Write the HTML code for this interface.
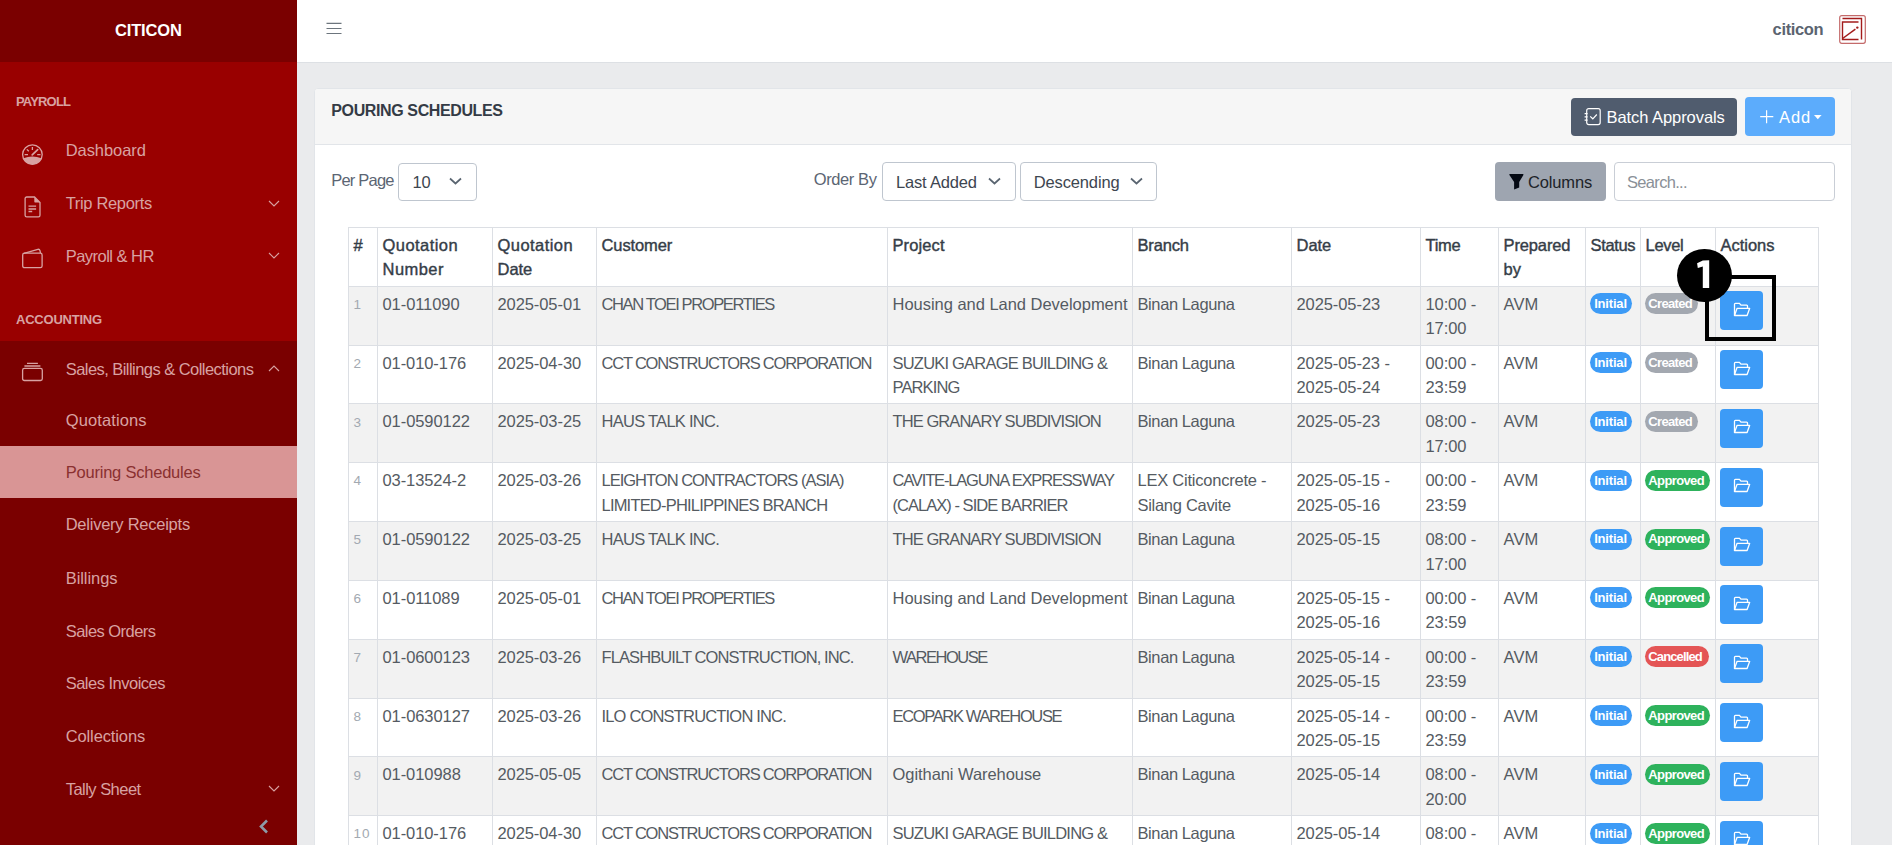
<!DOCTYPE html>
<html><head><meta charset="utf-8"><style>
html,body{margin:0;padding:0;width:1892px;height:845px;overflow:hidden;background:#eaebed;font-family:'Liberation Sans', sans-serif}
body>div,body>svg{position:absolute}
.t{white-space:nowrap}
</style></head><body>
<div style="left:0px;top:0px;width:297px;height:62px;background:#7a0000;"></div>
<div style="left:0px;top:62px;width:297px;height:279px;background:#990000;"></div>
<div style="left:0px;top:341px;width:297px;height:504px;background:#7a0000;"></div>
<div style="left:0px;top:446px;width:297px;height:52px;background:#d99595;"></div>
<div style="left:297px;top:0px;width:1595px;height:62px;background:#ffffff;border-bottom:1px solid #dde0e4;box-sizing:border-box;height:63px"></div>
<div style="left:314px;top:88px;width:1538px;height:800px;background:#fff;border:1px solid #e2e5e9;border-radius:4px;box-sizing:border-box"></div>
<div style="left:315px;top:89px;width:1536px;height:55px;background:#f6f6f6;border-bottom:1px solid #e2e5e9;border-radius:3px 3px 0 0"></div>
<div style="left:398px;top:162.5px;width:79px;height:38.5px;background:#fff;border:1px solid #bfc6cf;border-radius:4px;box-sizing:border-box"></div>
<svg style="left:449px;top:177.0px" width="13" height="8" viewBox="0 0 13 8"><path d="M1 1.5 L6.5 6.5 L12 1.5" fill="none" stroke="#5a6571" stroke-width="1.7"/></svg>
<div style="left:882px;top:162px;width:134px;height:39px;background:#fff;border:1px solid #bfc6cf;border-radius:4px;box-sizing:border-box"></div>
<svg style="left:988.2px;top:176.5px" width="13" height="8" viewBox="0 0 13 8"><path d="M1 1.5 L6.5 6.5 L12 1.5" fill="none" stroke="#5a6571" stroke-width="1.7"/></svg>
<div style="left:1020px;top:162px;width:137px;height:39px;background:#fff;border:1px solid #bfc6cf;border-radius:4px;box-sizing:border-box"></div>
<svg style="left:1130.2px;top:176.5px" width="13" height="8" viewBox="0 0 13 8"><path d="M1 1.5 L6.5 6.5 L12 1.5" fill="none" stroke="#5a6571" stroke-width="1.7"/></svg>
<div style="left:1571px;top:97.8px;width:166px;height:38.2px;background:#505c6e;border-radius:4px"></div>
<svg style="left:1584px;top:107px" width="18" height="19" viewBox="0 0 18 19"><rect x="2.7" y="1.7" width="13.5" height="15.9" rx="2" fill="none" stroke="#fff" stroke-width="1.2"/><path d="M0.6 6.6h3M0.6 9.9h3M0.6 13.2h3" stroke="#fff" stroke-width="1.3"/><path d="M6.2 9.4l2.6 2.4 4-4.3" fill="none" stroke="#fff" stroke-width="1.2"/></svg>
<div style="left:1745px;top:97px;width:90px;height:39px;background:#5cacfc;border-radius:4px"></div>
<svg style="left:1760px;top:110px" width="14" height="14" viewBox="0 0 14 14"><path d="M6.6 0.2V13.2M0.2 6.6H13.3" stroke="#fff" stroke-width="1.2"/></svg>
<svg style="left:1814px;top:115px" width="8" height="5" viewBox="0 0 8 5"><path d="M0 0H7.6L3.8 4.3Z" fill="#fff"/></svg>
<div style="left:1495px;top:162px;width:111px;height:39px;background:#9ea5b0;border-radius:4px"></div>
<svg style="left:1509px;top:174px" width="16" height="16" viewBox="0 0 16 16"><path d="M0.9 0H13.9Q14.9 0 14.4 0.9L10.2 8V13.6L5.1 15.4V8L0.4 0.9Q-0.1 0 0.9 0Z" fill="#050a14"/></svg>
<div style="left:1614px;top:162px;width:221px;height:39px;background:#fff;border:1px solid #c9ced6;border-radius:4px;box-sizing:border-box"></div>
<div style="left:348px;top:285.7px;width:1470px;height:58.83px;background:#f2f2f2;"></div>
<div style="left:348px;top:344.53px;width:1470px;height:58.83px;background:#ffffff;"></div>
<div style="left:348px;top:403.36px;width:1470px;height:58.83px;background:#f2f2f2;"></div>
<div style="left:348px;top:462.19px;width:1470px;height:58.83px;background:#ffffff;"></div>
<div style="left:348px;top:521.02px;width:1470px;height:58.83px;background:#f2f2f2;"></div>
<div style="left:348px;top:579.8499999999999px;width:1470px;height:58.83px;background:#ffffff;"></div>
<div style="left:348px;top:638.6800000000001px;width:1470px;height:58.83px;background:#f2f2f2;"></div>
<div style="left:348px;top:697.51px;width:1470px;height:58.83px;background:#ffffff;"></div>
<div style="left:348px;top:756.3399999999999px;width:1470px;height:58.83px;background:#f2f2f2;"></div>
<div style="left:348px;top:815.1700000000001px;width:1470px;height:58.83px;background:#ffffff;"></div>
<div style="left:348px;top:226.5px;width:1px;height:618.5px;background:#dcdfe4;"></div>
<div style="left:377px;top:226.5px;width:1px;height:618.5px;background:#dcdfe4;"></div>
<div style="left:492px;top:226.5px;width:1px;height:618.5px;background:#dcdfe4;"></div>
<div style="left:596px;top:226.5px;width:1px;height:618.5px;background:#dcdfe4;"></div>
<div style="left:887px;top:226.5px;width:1px;height:618.5px;background:#dcdfe4;"></div>
<div style="left:1132px;top:226.5px;width:1px;height:618.5px;background:#dcdfe4;"></div>
<div style="left:1291px;top:226.5px;width:1px;height:618.5px;background:#dcdfe4;"></div>
<div style="left:1420px;top:226.5px;width:1px;height:618.5px;background:#dcdfe4;"></div>
<div style="left:1498px;top:226.5px;width:1px;height:618.5px;background:#dcdfe4;"></div>
<div style="left:1585px;top:226.5px;width:1px;height:618.5px;background:#dcdfe4;"></div>
<div style="left:1640px;top:226.5px;width:1px;height:618.5px;background:#dcdfe4;"></div>
<div style="left:1715px;top:226.5px;width:1px;height:618.5px;background:#dcdfe4;"></div>
<div style="left:1818px;top:226.5px;width:1px;height:618.5px;background:#dcdfe4;"></div>
<div style="left:348px;top:226.5px;width:1471px;height:1px;background:#dcdfe4;"></div>
<div style="left:348px;top:285.7px;width:1471px;height:1px;background:#dcdfe4;"></div>
<div style="left:348px;top:344.53px;width:1471px;height:1px;background:#dcdfe4;"></div>
<div style="left:348px;top:403.36px;width:1471px;height:1px;background:#dcdfe4;"></div>
<div style="left:348px;top:462.19px;width:1471px;height:1px;background:#dcdfe4;"></div>
<div style="left:348px;top:521.02px;width:1471px;height:1px;background:#dcdfe4;"></div>
<div style="left:348px;top:579.8499999999999px;width:1471px;height:1px;background:#dcdfe4;"></div>
<div style="left:348px;top:638.6800000000001px;width:1471px;height:1px;background:#dcdfe4;"></div>
<div style="left:348px;top:697.51px;width:1471px;height:1px;background:#dcdfe4;"></div>
<div style="left:348px;top:756.3399999999999px;width:1471px;height:1px;background:#dcdfe4;"></div>
<div style="left:348px;top:815.1700000000001px;width:1471px;height:1px;background:#dcdfe4;"></div>
<div style="left:348px;top:874.0px;width:1471px;height:1px;background:#dcdfe4;"></div>
<div style="left:1589.7px;top:293.2px;width:42px;height:21px;background:#3d9bf6;border-radius:11px"></div>
<div style="left:1644.7px;top:293.2px;width:53px;height:21px;background:#a3a8b0;border-radius:11px"></div>
<div style="left:1720px;top:291.2px;width:43px;height:39px;background:#3d9bf6;border-radius:4px"></div>
<svg style="left:1733px;top:301.7px" width="18" height="15" viewBox="0 0 18 15"><path d="M1.5 13.5V2.2c0-.5.4-.9.9-.9h4l1.6 1.8h5.6c.5 0 .9.4.9.9v2.2" fill="none" stroke="#fff" stroke-width="1.3"/><path d="M1.5 13.5l2.6-7.2h12.6l-2.6 7.2z" fill="none" stroke="#fff" stroke-width="1.3" stroke-linejoin="round"/></svg>
<div style="left:1589.7px;top:352.03px;width:42px;height:21px;background:#3d9bf6;border-radius:11px"></div>
<div style="left:1644.7px;top:352.03px;width:53px;height:21px;background:#a3a8b0;border-radius:11px"></div>
<div style="left:1720px;top:350.03px;width:43px;height:39px;background:#3d9bf6;border-radius:4px"></div>
<svg style="left:1733px;top:360.53px" width="18" height="15" viewBox="0 0 18 15"><path d="M1.5 13.5V2.2c0-.5.4-.9.9-.9h4l1.6 1.8h5.6c.5 0 .9.4.9.9v2.2" fill="none" stroke="#fff" stroke-width="1.3"/><path d="M1.5 13.5l2.6-7.2h12.6l-2.6 7.2z" fill="none" stroke="#fff" stroke-width="1.3" stroke-linejoin="round"/></svg>
<div style="left:1589.7px;top:410.86px;width:42px;height:21px;background:#3d9bf6;border-radius:11px"></div>
<div style="left:1644.7px;top:410.86px;width:53px;height:21px;background:#a3a8b0;border-radius:11px"></div>
<div style="left:1720px;top:408.86px;width:43px;height:39px;background:#3d9bf6;border-radius:4px"></div>
<svg style="left:1733px;top:419.36px" width="18" height="15" viewBox="0 0 18 15"><path d="M1.5 13.5V2.2c0-.5.4-.9.9-.9h4l1.6 1.8h5.6c.5 0 .9.4.9.9v2.2" fill="none" stroke="#fff" stroke-width="1.3"/><path d="M1.5 13.5l2.6-7.2h12.6l-2.6 7.2z" fill="none" stroke="#fff" stroke-width="1.3" stroke-linejoin="round"/></svg>
<div style="left:1589.7px;top:469.69px;width:42px;height:21px;background:#3d9bf6;border-radius:11px"></div>
<div style="left:1644.7px;top:469.69px;width:65px;height:21px;background:#2eb25c;border-radius:11px"></div>
<div style="left:1720px;top:467.69px;width:43px;height:39px;background:#3d9bf6;border-radius:4px"></div>
<svg style="left:1733px;top:478.19px" width="18" height="15" viewBox="0 0 18 15"><path d="M1.5 13.5V2.2c0-.5.4-.9.9-.9h4l1.6 1.8h5.6c.5 0 .9.4.9.9v2.2" fill="none" stroke="#fff" stroke-width="1.3"/><path d="M1.5 13.5l2.6-7.2h12.6l-2.6 7.2z" fill="none" stroke="#fff" stroke-width="1.3" stroke-linejoin="round"/></svg>
<div style="left:1589.7px;top:528.52px;width:42px;height:21px;background:#3d9bf6;border-radius:11px"></div>
<div style="left:1644.7px;top:528.52px;width:65px;height:21px;background:#2eb25c;border-radius:11px"></div>
<div style="left:1720px;top:526.52px;width:43px;height:39px;background:#3d9bf6;border-radius:4px"></div>
<svg style="left:1733px;top:537.02px" width="18" height="15" viewBox="0 0 18 15"><path d="M1.5 13.5V2.2c0-.5.4-.9.9-.9h4l1.6 1.8h5.6c.5 0 .9.4.9.9v2.2" fill="none" stroke="#fff" stroke-width="1.3"/><path d="M1.5 13.5l2.6-7.2h12.6l-2.6 7.2z" fill="none" stroke="#fff" stroke-width="1.3" stroke-linejoin="round"/></svg>
<div style="left:1589.7px;top:587.3499999999999px;width:42px;height:21px;background:#3d9bf6;border-radius:11px"></div>
<div style="left:1644.7px;top:587.3499999999999px;width:65px;height:21px;background:#2eb25c;border-radius:11px"></div>
<div style="left:1720px;top:585.3499999999999px;width:43px;height:39px;background:#3d9bf6;border-radius:4px"></div>
<svg style="left:1733px;top:595.8499999999999px" width="18" height="15" viewBox="0 0 18 15"><path d="M1.5 13.5V2.2c0-.5.4-.9.9-.9h4l1.6 1.8h5.6c.5 0 .9.4.9.9v2.2" fill="none" stroke="#fff" stroke-width="1.3"/><path d="M1.5 13.5l2.6-7.2h12.6l-2.6 7.2z" fill="none" stroke="#fff" stroke-width="1.3" stroke-linejoin="round"/></svg>
<div style="left:1589.7px;top:646.1800000000001px;width:42px;height:21px;background:#3d9bf6;border-radius:11px"></div>
<div style="left:1644.7px;top:646.1800000000001px;width:64px;height:21px;background:#e45555;border-radius:11px"></div>
<div style="left:1720px;top:644.1800000000001px;width:43px;height:39px;background:#3d9bf6;border-radius:4px"></div>
<svg style="left:1733px;top:654.6800000000001px" width="18" height="15" viewBox="0 0 18 15"><path d="M1.5 13.5V2.2c0-.5.4-.9.9-.9h4l1.6 1.8h5.6c.5 0 .9.4.9.9v2.2" fill="none" stroke="#fff" stroke-width="1.3"/><path d="M1.5 13.5l2.6-7.2h12.6l-2.6 7.2z" fill="none" stroke="#fff" stroke-width="1.3" stroke-linejoin="round"/></svg>
<div style="left:1589.7px;top:705.01px;width:42px;height:21px;background:#3d9bf6;border-radius:11px"></div>
<div style="left:1644.7px;top:705.01px;width:65px;height:21px;background:#2eb25c;border-radius:11px"></div>
<div style="left:1720px;top:703.01px;width:43px;height:39px;background:#3d9bf6;border-radius:4px"></div>
<svg style="left:1733px;top:713.51px" width="18" height="15" viewBox="0 0 18 15"><path d="M1.5 13.5V2.2c0-.5.4-.9.9-.9h4l1.6 1.8h5.6c.5 0 .9.4.9.9v2.2" fill="none" stroke="#fff" stroke-width="1.3"/><path d="M1.5 13.5l2.6-7.2h12.6l-2.6 7.2z" fill="none" stroke="#fff" stroke-width="1.3" stroke-linejoin="round"/></svg>
<div style="left:1589.7px;top:763.8399999999999px;width:42px;height:21px;background:#3d9bf6;border-radius:11px"></div>
<div style="left:1644.7px;top:763.8399999999999px;width:65px;height:21px;background:#2eb25c;border-radius:11px"></div>
<div style="left:1720px;top:761.8399999999999px;width:43px;height:39px;background:#3d9bf6;border-radius:4px"></div>
<svg style="left:1733px;top:772.3399999999999px" width="18" height="15" viewBox="0 0 18 15"><path d="M1.5 13.5V2.2c0-.5.4-.9.9-.9h4l1.6 1.8h5.6c.5 0 .9.4.9.9v2.2" fill="none" stroke="#fff" stroke-width="1.3"/><path d="M1.5 13.5l2.6-7.2h12.6l-2.6 7.2z" fill="none" stroke="#fff" stroke-width="1.3" stroke-linejoin="round"/></svg>
<div style="left:1589.7px;top:822.6700000000001px;width:42px;height:21px;background:#3d9bf6;border-radius:11px"></div>
<div style="left:1644.7px;top:822.6700000000001px;width:65px;height:21px;background:#2eb25c;border-radius:11px"></div>
<div style="left:1720px;top:820.6700000000001px;width:43px;height:39px;background:#3d9bf6;border-radius:4px"></div>
<svg style="left:1733px;top:831.1700000000001px" width="18" height="15" viewBox="0 0 18 15"><path d="M1.5 13.5V2.2c0-.5.4-.9.9-.9h4l1.6 1.8h5.6c.5 0 .9.4.9.9v2.2" fill="none" stroke="#fff" stroke-width="1.3"/><path d="M1.5 13.5l2.6-7.2h12.6l-2.6 7.2z" fill="none" stroke="#fff" stroke-width="1.3" stroke-linejoin="round"/></svg>
<svg style="left:21px;top:144px" width="23" height="23" viewBox="0 0 23 23"><circle cx="11.4" cy="10.6" r="9.8" fill="none" stroke="#d8a2a2" stroke-width="1.3"/><path d="M2.33 14.3 Q11.4 10.8 20.47 14.3 A9.8 9.8 0 0 1 2.33 14.3Z" fill="#d8a2a2"/><path d="M11.2 10.9 L16.7 5.6" stroke="#d8a2a2" stroke-width="1.7" stroke-linecap="round"/><path d="M3.6 10.6H7M16.2 10.6H19.5M11.4 3V6M5.8 5.4L7.8 7.3" stroke="#d8a2a2" stroke-width="1.3"/></svg>
<svg style="left:23px;top:196px" width="19" height="23" viewBox="0 0 19 23"><path d="M2.1 2.6c0-.9.7-1.6 1.6-1.6h7.8l5.5 5.6v12.7c0 .9-.7 1.6-1.6 1.6H3.7c-.9 0-1.6-.7-1.6-1.6z" fill="none" stroke="#d8a2a2" stroke-width="1.3"/><path d="M11.3 1.2L17 6.5H12.3c-.6 0-1-.4-1-1z" fill="#d8a2a2"/><path d="M5.5 10.2h7.6M5.5 13h7.6M5.5 15.5h3.7" stroke="#d8a2a2" stroke-width="1.3"/></svg>
<svg style="left:21px;top:247px" width="23" height="23" viewBox="0 0 23 23"><rect x="1.7" y="6.2" width="19.4" height="14.5" rx="1.8" fill="none" stroke="#d8a2a2" stroke-width="1.3"/><path d="M3 6.3L16.8 2.3Q18.5 1.9 19 3.6L19.5 6.2" fill="none" stroke="#d8a2a2" stroke-width="1.3"/></svg>
<svg style="left:21px;top:361px" width="23" height="21" viewBox="0 0 23 21"><rect x="1.6" y="7.4" width="19.7" height="12.1" rx="1.8" fill="none" stroke="#d8a2a2" stroke-width="1.3"/><path d="M6 2.3h10.9M3.4 5h16" stroke="#d8a2a2" stroke-width="1.3"/></svg>
<svg style="left:268px;top:199.5px" width="12" height="7" viewBox="0 0 12 7"><path d="M1 1l5 5 5-5" fill="none" stroke="#d8a2a2" stroke-width="1.1"/></svg>
<svg style="left:268px;top:251.5px" width="12" height="7" viewBox="0 0 12 7"><path d="M1 1l5 5 5-5" fill="none" stroke="#d8a2a2" stroke-width="1.1"/></svg>
<svg style="left:268px;top:784.5px" width="12" height="7" viewBox="0 0 12 7"><path d="M1 1l5 5 5-5" fill="none" stroke="#d8a2a2" stroke-width="1.1"/></svg>
<svg style="left:268px;top:364.5px" width="12" height="7" viewBox="0 0 12 7"><path d="M1 6l5-5 5 5" fill="none" stroke="#d8a2a2" stroke-width="1.1"/></svg>
<svg style="left:258px;top:819px" width="11" height="15" viewBox="0 0 11 15"><path d="M9 1.5L3 7.5l6 6" fill="none" stroke="#8d9aa6" stroke-width="2.6"/></svg>
<svg style="left:326px;top:20px" width="16" height="16" viewBox="0 0 16 16"><path d="M0.5 3.4h15M0.5 8.5h15M0.5 13.5h15" stroke="#6c757d" stroke-width="1.1"/></svg>
<svg style="left:1839px;top:15px" width="27" height="29" viewBox="0 0 27 29"><rect x="0.7" y="0.7" width="25.6" height="27.6" rx="2" fill="none" stroke="#c46a6a" stroke-width="1.2"/><path d="M3.5 3.5h19v21" fill="none" stroke="#a31c1c" stroke-width="1.4"/><path d="M19.5 7H3.5v17.5h16" fill="none" stroke="#a31c1c" stroke-width="1.4"/><path d="M3.6 23.5L16.4 14.2" stroke="#a31c1c" stroke-width="1.5"/><circle cx="18.3" cy="12.6" r="1.2" fill="#a31c1c"/></svg>
<div style="left:1704.7px;top:275.4px;width:71.6px;height:65.4px;border:4.5px solid #000;box-sizing:border-box"></div>
<div style="left:1677px;top:248.5px;width:54.5px;height:53px;border-radius:50%;background:#000"></div>
<svg style="left:1690px;top:255px" width="30" height="40" viewBox="0 0 30 40"><path d="M7.1 8.2 L12.8 5.6 L19.2 5.2 V32.9 H12.8 V11.4 L7.8 12.9 Z" fill="#fff"/></svg>
<div class="t" style="left:115px;top:18.73px;font-size:16.5px;line-height:23.1px;font-weight:700;color:#ffffff;letter-spacing:-0.152px;">CITICON</div>
<div class="t" style="left:16px;top:92.70px;font-size:13px;line-height:18.2px;font-weight:700;color:#d8a2a2;letter-spacing:-0.835px;">PAYROLL</div>
<div class="t" style="left:65.7px;top:139.43px;font-size:16.5px;line-height:23.1px;font-weight:400;color:#d8a2a2;letter-spacing:-0.068px;">Dashboard</div>
<div class="t" style="left:65.7px;top:192.33px;font-size:16.5px;line-height:23.1px;font-weight:400;color:#d8a2a2;letter-spacing:-0.328px;">Trip Reports</div>
<div class="t" style="left:65.7px;top:245.13px;font-size:16.5px;line-height:23.1px;font-weight:400;color:#d8a2a2;letter-spacing:-0.529px;">Payroll &amp; HR</div>
<div class="t" style="left:16px;top:310.80px;font-size:13px;line-height:18.2px;font-weight:700;color:#d8a2a2;letter-spacing:-0.222px;">ACCOUNTING</div>
<div class="t" style="left:65.7px;top:357.83px;font-size:16.5px;line-height:23.1px;font-weight:400;color:#d8a2a2;letter-spacing:-0.548px;">Sales, Billings &amp; Collections</div>
<div class="t" style="left:65.7px;top:408.53px;font-size:16.5px;line-height:23.1px;font-weight:400;color:#d8a2a2;letter-spacing:0.117px;">Quotations</div>
<div class="t" style="left:65.7px;top:460.73px;font-size:16.5px;line-height:23.1px;font-weight:400;color:#8a3030;letter-spacing:-0.216px;">Pouring Schedules</div>
<div class="t" style="left:65.7px;top:513.03px;font-size:16.5px;line-height:23.1px;font-weight:400;color:#d8a2a2;letter-spacing:-0.245px;">Delivery Receipts</div>
<div class="t" style="left:65.7px;top:566.93px;font-size:16.5px;line-height:23.1px;font-weight:400;color:#d8a2a2;letter-spacing:-0.060px;">Billings</div>
<div class="t" style="left:65.7px;top:619.63px;font-size:16.5px;line-height:23.1px;font-weight:400;color:#d8a2a2;letter-spacing:-0.540px;">Sales Orders</div>
<div class="t" style="left:65.7px;top:672.43px;font-size:16.5px;line-height:23.1px;font-weight:400;color:#d8a2a2;letter-spacing:-0.503px;">Sales Invoices</div>
<div class="t" style="left:65.7px;top:725.03px;font-size:16.5px;line-height:23.1px;font-weight:400;color:#d8a2a2;letter-spacing:-0.115px;">Collections</div>
<div class="t" style="left:65.7px;top:777.83px;font-size:16.5px;line-height:23.1px;font-weight:400;color:#d8a2a2;letter-spacing:-0.523px;">Tally Sheet</div>
<div class="t" style="left:1772.6px;top:18.43px;font-size:16.5px;line-height:23.1px;font-weight:700;color:#5b6470;letter-spacing:-0.349px;">citicon</div>
<div class="t" style="left:331.3px;top:99.96px;font-size:16px;line-height:22.4px;font-weight:700;color:#343b45;letter-spacing:-0.383px;">POURING SCHEDULES</div>
<div class="t" style="left:331.3px;top:169.23px;font-size:16.5px;line-height:23.1px;font-weight:400;color:#5b6573;letter-spacing:-0.803px;">Per Page</div>
<div class="t" style="left:813.7px;top:168.23px;font-size:16.5px;line-height:23.1px;font-weight:400;color:#5b6573;letter-spacing:-0.395px;">Order By</div>
<div class="t" style="left:412.5px;top:171.13px;font-size:16.5px;line-height:23.1px;font-weight:400;color:#3d4650;letter-spacing:-0.104px;">10</div>
<div class="t" style="left:896px;top:171.13px;font-size:16.5px;line-height:23.1px;font-weight:400;color:#3d4650;letter-spacing:-0.178px;">Last Added</div>
<div class="t" style="left:1033.7px;top:171.13px;font-size:16.5px;line-height:23.1px;font-weight:400;color:#3d4650;letter-spacing:-0.129px;">Descending</div>
<div class="t" style="left:1606.5px;top:106.23px;font-size:16.5px;line-height:23.1px;font-weight:400;color:#ffffff;letter-spacing:-0.064px;">Batch Approvals</div>
<div class="t" style="left:1779px;top:106.23px;font-size:16.5px;line-height:23.1px;font-weight:400;color:#ffffff;letter-spacing:0.909px;">Add</div>
<div class="t" style="left:1528px;top:171.13px;font-size:16.5px;line-height:23.1px;font-weight:400;color:#1d2329;letter-spacing:-0.143px;">Columns</div>
<div class="t" style="left:1627px;top:171.13px;font-size:16.5px;line-height:23.1px;font-weight:400;color:#8a9097;letter-spacing:-0.681px;">Search...</div>
<div class="t" style="left:353.5px;top:233.53px;font-size:16.5px;line-height:23.1px;font-weight:400;color:#353d47;letter-spacing:0.000px;-webkit-text-stroke:0.4px #353d47;">#</div>
<div class="t" style="left:382.5px;top:233.53px;font-size:16.5px;line-height:23.1px;font-weight:400;color:#353d47;letter-spacing:0.441px;-webkit-text-stroke:0.4px #353d47;">Quotation</div>
<div class="t" style="left:382.5px;top:258.03px;font-size:16.5px;line-height:23.1px;font-weight:400;color:#353d47;letter-spacing:0.462px;-webkit-text-stroke:0.4px #353d47;">Number</div>
<div class="t" style="left:497.5px;top:233.53px;font-size:16.5px;line-height:23.1px;font-weight:400;color:#353d47;letter-spacing:0.441px;-webkit-text-stroke:0.4px #353d47;">Quotation</div>
<div class="t" style="left:497.5px;top:258.03px;font-size:16.5px;line-height:23.1px;font-weight:400;color:#353d47;letter-spacing:-0.026px;-webkit-text-stroke:0.4px #353d47;">Date</div>
<div class="t" style="left:601.5px;top:233.53px;font-size:16.5px;line-height:23.1px;font-weight:400;color:#353d47;letter-spacing:-0.103px;-webkit-text-stroke:0.4px #353d47;">Customer</div>
<div class="t" style="left:892.5px;top:233.53px;font-size:16.5px;line-height:23.1px;font-weight:400;color:#353d47;letter-spacing:0.105px;-webkit-text-stroke:0.4px #353d47;">Project</div>
<div class="t" style="left:1137.5px;top:233.53px;font-size:16.5px;line-height:23.1px;font-weight:400;color:#353d47;letter-spacing:-0.181px;-webkit-text-stroke:0.4px #353d47;">Branch</div>
<div class="t" style="left:1296.5px;top:233.53px;font-size:16.5px;line-height:23.1px;font-weight:400;color:#353d47;letter-spacing:-0.026px;-webkit-text-stroke:0.4px #353d47;">Date</div>
<div class="t" style="left:1425.5px;top:233.53px;font-size:16.5px;line-height:23.1px;font-weight:400;color:#353d47;letter-spacing:-0.259px;-webkit-text-stroke:0.4px #353d47;">Time</div>
<div class="t" style="left:1503.5px;top:233.53px;font-size:16.5px;line-height:23.1px;font-weight:400;color:#353d47;letter-spacing:-0.129px;-webkit-text-stroke:0.4px #353d47;">Prepared</div>
<div class="t" style="left:1503.5px;top:258.03px;font-size:16.5px;line-height:23.1px;font-weight:400;color:#353d47;letter-spacing:0.123px;-webkit-text-stroke:0.4px #353d47;">by</div>
<div class="t" style="left:1590.5px;top:233.53px;font-size:16.5px;line-height:23.1px;font-weight:400;color:#353d47;letter-spacing:-0.345px;-webkit-text-stroke:0.4px #353d47;">Status</div>
<div class="t" style="left:1645.5px;top:233.53px;font-size:16.5px;line-height:23.1px;font-weight:400;color:#353d47;letter-spacing:-0.295px;-webkit-text-stroke:0.4px #353d47;">Level</div>
<div class="t" style="left:1720.5px;top:233.53px;font-size:16.5px;line-height:23.1px;font-weight:400;color:#353d47;letter-spacing:-0.026px;-webkit-text-stroke:0.4px #353d47;">Actions</div>
<div class="t" style="left:353.5px;top:295.87px;font-size:13.5px;line-height:18.9px;font-weight:400;color:#a2a9b1;letter-spacing:0.000px;">1</div>
<div class="t" style="left:382.5px;top:292.73px;font-size:16.5px;line-height:23.1px;font-weight:400;color:#555b62;letter-spacing:-0.074px;">01-011090</div>
<div class="t" style="left:497.5px;top:292.73px;font-size:16.5px;line-height:23.1px;font-weight:400;color:#555b62;letter-spacing:-0.084px;">2025-05-01</div>
<div class="t" style="left:601.5px;top:292.73px;font-size:16.5px;line-height:23.1px;font-weight:400;color:#555b62;letter-spacing:-1.373px;">CHAN TOEI PROPERTIES</div>
<div class="t" style="left:892.5px;top:292.73px;font-size:16.5px;line-height:23.1px;font-weight:400;color:#555b62;letter-spacing:-0.028px;">Housing and Land Development</div>
<div class="t" style="left:1137.5px;top:292.73px;font-size:16.5px;line-height:23.1px;font-weight:400;color:#555b62;letter-spacing:-0.406px;">Binan Laguna</div>
<div class="t" style="left:1296.5px;top:292.73px;font-size:16.5px;line-height:23.1px;font-weight:400;color:#555b62;letter-spacing:-0.084px;">2025-05-23</div>
<div class="t" style="left:1425.5px;top:292.73px;font-size:16.5px;line-height:23.1px;font-weight:400;color:#555b62;letter-spacing:-0.108px;">10:00 -</div>
<div class="t" style="left:1425.5px;top:317.23px;font-size:16.5px;line-height:23.1px;font-weight:400;color:#555b62;letter-spacing:-0.090px;">17:00</div>
<div class="t" style="left:1503.5px;top:292.73px;font-size:16.5px;line-height:23.1px;font-weight:400;color:#555b62;letter-spacing:0.157px;">AVM</div>
<div class="t" style="left:1594.2px;top:295.10px;font-size:13px;line-height:18.2px;font-weight:700;color:#ffffff;letter-spacing:-0.189px;">Initial</div>
<div class="t" style="left:1648.3000000000002px;top:295.10px;font-size:13px;line-height:18.2px;font-weight:700;color:#ffffff;letter-spacing:-0.678px;">Created</div>
<div class="t" style="left:353.5px;top:354.70px;font-size:13.5px;line-height:18.9px;font-weight:400;color:#a2a9b1;letter-spacing:0.000px;">2</div>
<div class="t" style="left:382.5px;top:351.56px;font-size:16.5px;line-height:23.1px;font-weight:400;color:#555b62;letter-spacing:-0.084px;">01-010-176</div>
<div class="t" style="left:497.5px;top:351.56px;font-size:16.5px;line-height:23.1px;font-weight:400;color:#555b62;letter-spacing:-0.084px;">2025-04-30</div>
<div class="t" style="left:601.5px;top:351.56px;font-size:16.5px;line-height:23.1px;font-weight:400;color:#555b62;letter-spacing:-1.204px;">CCT CONSTRUCTORS CORPORATION</div>
<div class="t" style="left:892.5px;top:351.56px;font-size:16.5px;line-height:23.1px;font-weight:400;color:#555b62;letter-spacing:-0.791px;">SUZUKI GARAGE BUILDING &amp;</div>
<div class="t" style="left:892.5px;top:376.06px;font-size:16.5px;line-height:23.1px;font-weight:400;color:#555b62;letter-spacing:-0.868px;">PARKING</div>
<div class="t" style="left:1137.5px;top:351.56px;font-size:16.5px;line-height:23.1px;font-weight:400;color:#555b62;letter-spacing:-0.406px;">Binan Laguna</div>
<div class="t" style="left:1296.5px;top:351.56px;font-size:16.5px;line-height:23.1px;font-weight:400;color:#555b62;letter-spacing:-0.096px;">2025-05-23 -</div>
<div class="t" style="left:1296.5px;top:376.06px;font-size:16.5px;line-height:23.1px;font-weight:400;color:#555b62;letter-spacing:-0.084px;">2025-05-24</div>
<div class="t" style="left:1425.5px;top:351.56px;font-size:16.5px;line-height:23.1px;font-weight:400;color:#555b62;letter-spacing:-0.111px;">00:00 -</div>
<div class="t" style="left:1425.5px;top:376.06px;font-size:16.5px;line-height:23.1px;font-weight:400;color:#555b62;letter-spacing:-0.092px;">23:59</div>
<div class="t" style="left:1503.5px;top:351.56px;font-size:16.5px;line-height:23.1px;font-weight:400;color:#555b62;letter-spacing:0.157px;">AVM</div>
<div class="t" style="left:1594.2px;top:353.93px;font-size:13px;line-height:18.2px;font-weight:700;color:#ffffff;letter-spacing:-0.189px;">Initial</div>
<div class="t" style="left:1648.3000000000002px;top:353.93px;font-size:13px;line-height:18.2px;font-weight:700;color:#ffffff;letter-spacing:-0.678px;">Created</div>
<div class="t" style="left:353.5px;top:413.53px;font-size:13.5px;line-height:18.9px;font-weight:400;color:#a2a9b1;letter-spacing:0.000px;">3</div>
<div class="t" style="left:382.5px;top:410.39px;font-size:16.5px;line-height:23.1px;font-weight:400;color:#555b62;letter-spacing:-0.073px;">01-0590122</div>
<div class="t" style="left:497.5px;top:410.39px;font-size:16.5px;line-height:23.1px;font-weight:400;color:#555b62;letter-spacing:-0.084px;">2025-03-25</div>
<div class="t" style="left:601.5px;top:410.39px;font-size:16.5px;line-height:23.1px;font-weight:400;color:#555b62;letter-spacing:-0.728px;">HAUS TALK INC.</div>
<div class="t" style="left:892.5px;top:410.39px;font-size:16.5px;line-height:23.1px;font-weight:400;color:#555b62;letter-spacing:-0.923px;">THE GRANARY SUBDIVISION</div>
<div class="t" style="left:1137.5px;top:410.39px;font-size:16.5px;line-height:23.1px;font-weight:400;color:#555b62;letter-spacing:-0.406px;">Binan Laguna</div>
<div class="t" style="left:1296.5px;top:410.39px;font-size:16.5px;line-height:23.1px;font-weight:400;color:#555b62;letter-spacing:-0.084px;">2025-05-23</div>
<div class="t" style="left:1425.5px;top:410.39px;font-size:16.5px;line-height:23.1px;font-weight:400;color:#555b62;letter-spacing:-0.111px;">08:00 -</div>
<div class="t" style="left:1425.5px;top:434.89px;font-size:16.5px;line-height:23.1px;font-weight:400;color:#555b62;letter-spacing:-0.090px;">17:00</div>
<div class="t" style="left:1503.5px;top:410.39px;font-size:16.5px;line-height:23.1px;font-weight:400;color:#555b62;letter-spacing:0.157px;">AVM</div>
<div class="t" style="left:1594.2px;top:412.76px;font-size:13px;line-height:18.2px;font-weight:700;color:#ffffff;letter-spacing:-0.189px;">Initial</div>
<div class="t" style="left:1648.3000000000002px;top:412.76px;font-size:13px;line-height:18.2px;font-weight:700;color:#ffffff;letter-spacing:-0.678px;">Created</div>
<div class="t" style="left:353.5px;top:472.36px;font-size:13.5px;line-height:18.9px;font-weight:400;color:#a2a9b1;letter-spacing:0.000px;">4</div>
<div class="t" style="left:382.5px;top:469.22px;font-size:16.5px;line-height:23.1px;font-weight:400;color:#555b62;letter-spacing:-0.084px;">03-13524-2</div>
<div class="t" style="left:497.5px;top:469.22px;font-size:16.5px;line-height:23.1px;font-weight:400;color:#555b62;letter-spacing:-0.084px;">2025-03-26</div>
<div class="t" style="left:601.5px;top:469.22px;font-size:16.5px;line-height:23.1px;font-weight:400;color:#555b62;letter-spacing:-0.997px;">LEIGHTON CONTRACTORS (ASIA)</div>
<div class="t" style="left:601.5px;top:493.72px;font-size:16.5px;line-height:23.1px;font-weight:400;color:#555b62;letter-spacing:-0.801px;">LIMITED-PHILIPPINES BRANCH</div>
<div class="t" style="left:892.5px;top:469.22px;font-size:16.5px;line-height:23.1px;font-weight:400;color:#555b62;letter-spacing:-1.161px;">CAVITE-LAGUNA EXPRESSWAY</div>
<div class="t" style="left:892.5px;top:493.72px;font-size:16.5px;line-height:23.1px;font-weight:400;color:#555b62;letter-spacing:-0.966px;">(CALAX) - SIDE BARRIER</div>
<div class="t" style="left:1137.5px;top:469.22px;font-size:16.5px;line-height:23.1px;font-weight:400;color:#555b62;letter-spacing:-0.228px;">LEX Citiconcrete -</div>
<div class="t" style="left:1137.5px;top:493.72px;font-size:16.5px;line-height:23.1px;font-weight:400;color:#555b62;letter-spacing:-0.295px;">Silang Cavite</div>
<div class="t" style="left:1296.5px;top:469.22px;font-size:16.5px;line-height:23.1px;font-weight:400;color:#555b62;letter-spacing:-0.096px;">2025-05-15 -</div>
<div class="t" style="left:1296.5px;top:493.72px;font-size:16.5px;line-height:23.1px;font-weight:400;color:#555b62;letter-spacing:-0.084px;">2025-05-16</div>
<div class="t" style="left:1425.5px;top:469.22px;font-size:16.5px;line-height:23.1px;font-weight:400;color:#555b62;letter-spacing:-0.111px;">00:00 -</div>
<div class="t" style="left:1425.5px;top:493.72px;font-size:16.5px;line-height:23.1px;font-weight:400;color:#555b62;letter-spacing:-0.092px;">23:59</div>
<div class="t" style="left:1503.5px;top:469.22px;font-size:16.5px;line-height:23.1px;font-weight:400;color:#555b62;letter-spacing:0.157px;">AVM</div>
<div class="t" style="left:1594.2px;top:471.59px;font-size:13px;line-height:18.2px;font-weight:700;color:#ffffff;letter-spacing:-0.189px;">Initial</div>
<div class="t" style="left:1648.3000000000002px;top:471.59px;font-size:13px;line-height:18.2px;font-weight:700;color:#ffffff;letter-spacing:-0.619px;">Approved</div>
<div class="t" style="left:353.5px;top:531.19px;font-size:13.5px;line-height:18.9px;font-weight:400;color:#a2a9b1;letter-spacing:0.000px;">5</div>
<div class="t" style="left:382.5px;top:528.05px;font-size:16.5px;line-height:23.1px;font-weight:400;color:#555b62;letter-spacing:-0.073px;">01-0590122</div>
<div class="t" style="left:497.5px;top:528.05px;font-size:16.5px;line-height:23.1px;font-weight:400;color:#555b62;letter-spacing:-0.084px;">2025-03-25</div>
<div class="t" style="left:601.5px;top:528.05px;font-size:16.5px;line-height:23.1px;font-weight:400;color:#555b62;letter-spacing:-0.728px;">HAUS TALK INC.</div>
<div class="t" style="left:892.5px;top:528.05px;font-size:16.5px;line-height:23.1px;font-weight:400;color:#555b62;letter-spacing:-0.923px;">THE GRANARY SUBDIVISION</div>
<div class="t" style="left:1137.5px;top:528.05px;font-size:16.5px;line-height:23.1px;font-weight:400;color:#555b62;letter-spacing:-0.406px;">Binan Laguna</div>
<div class="t" style="left:1296.5px;top:528.05px;font-size:16.5px;line-height:23.1px;font-weight:400;color:#555b62;letter-spacing:-0.084px;">2025-05-15</div>
<div class="t" style="left:1425.5px;top:528.05px;font-size:16.5px;line-height:23.1px;font-weight:400;color:#555b62;letter-spacing:-0.111px;">08:00 -</div>
<div class="t" style="left:1425.5px;top:552.55px;font-size:16.5px;line-height:23.1px;font-weight:400;color:#555b62;letter-spacing:-0.090px;">17:00</div>
<div class="t" style="left:1503.5px;top:528.05px;font-size:16.5px;line-height:23.1px;font-weight:400;color:#555b62;letter-spacing:0.157px;">AVM</div>
<div class="t" style="left:1594.2px;top:530.42px;font-size:13px;line-height:18.2px;font-weight:700;color:#ffffff;letter-spacing:-0.189px;">Initial</div>
<div class="t" style="left:1648.3000000000002px;top:530.42px;font-size:13px;line-height:18.2px;font-weight:700;color:#ffffff;letter-spacing:-0.619px;">Approved</div>
<div class="t" style="left:353.5px;top:590.02px;font-size:13.5px;line-height:18.9px;font-weight:400;color:#a2a9b1;letter-spacing:0.000px;">6</div>
<div class="t" style="left:382.5px;top:586.88px;font-size:16.5px;line-height:23.1px;font-weight:400;color:#555b62;letter-spacing:-0.074px;">01-011089</div>
<div class="t" style="left:497.5px;top:586.88px;font-size:16.5px;line-height:23.1px;font-weight:400;color:#555b62;letter-spacing:-0.084px;">2025-05-01</div>
<div class="t" style="left:601.5px;top:586.88px;font-size:16.5px;line-height:23.1px;font-weight:400;color:#555b62;letter-spacing:-1.373px;">CHAN TOEI PROPERTIES</div>
<div class="t" style="left:892.5px;top:586.88px;font-size:16.5px;line-height:23.1px;font-weight:400;color:#555b62;letter-spacing:-0.028px;">Housing and Land Development</div>
<div class="t" style="left:1137.5px;top:586.88px;font-size:16.5px;line-height:23.1px;font-weight:400;color:#555b62;letter-spacing:-0.406px;">Binan Laguna</div>
<div class="t" style="left:1296.5px;top:586.88px;font-size:16.5px;line-height:23.1px;font-weight:400;color:#555b62;letter-spacing:-0.096px;">2025-05-15 -</div>
<div class="t" style="left:1296.5px;top:611.38px;font-size:16.5px;line-height:23.1px;font-weight:400;color:#555b62;letter-spacing:-0.084px;">2025-05-16</div>
<div class="t" style="left:1425.5px;top:586.88px;font-size:16.5px;line-height:23.1px;font-weight:400;color:#555b62;letter-spacing:-0.111px;">00:00 -</div>
<div class="t" style="left:1425.5px;top:611.38px;font-size:16.5px;line-height:23.1px;font-weight:400;color:#555b62;letter-spacing:-0.092px;">23:59</div>
<div class="t" style="left:1503.5px;top:586.88px;font-size:16.5px;line-height:23.1px;font-weight:400;color:#555b62;letter-spacing:0.157px;">AVM</div>
<div class="t" style="left:1594.2px;top:589.25px;font-size:13px;line-height:18.2px;font-weight:700;color:#ffffff;letter-spacing:-0.189px;">Initial</div>
<div class="t" style="left:1648.3000000000002px;top:589.25px;font-size:13px;line-height:18.2px;font-weight:700;color:#ffffff;letter-spacing:-0.619px;">Approved</div>
<div class="t" style="left:353.5px;top:648.85px;font-size:13.5px;line-height:18.9px;font-weight:400;color:#a2a9b1;letter-spacing:0.000px;">7</div>
<div class="t" style="left:382.5px;top:645.71px;font-size:16.5px;line-height:23.1px;font-weight:400;color:#555b62;letter-spacing:-0.073px;">01-0600123</div>
<div class="t" style="left:497.5px;top:645.71px;font-size:16.5px;line-height:23.1px;font-weight:400;color:#555b62;letter-spacing:-0.084px;">2025-03-26</div>
<div class="t" style="left:601.5px;top:645.71px;font-size:16.5px;line-height:23.1px;font-weight:400;color:#555b62;letter-spacing:-0.900px;">FLASHBUILT CONSTRUCTION, INC.</div>
<div class="t" style="left:892.5px;top:645.71px;font-size:16.5px;line-height:23.1px;font-weight:400;color:#555b62;letter-spacing:-1.482px;">WAREHOUSE</div>
<div class="t" style="left:1137.5px;top:645.71px;font-size:16.5px;line-height:23.1px;font-weight:400;color:#555b62;letter-spacing:-0.406px;">Binan Laguna</div>
<div class="t" style="left:1296.5px;top:645.71px;font-size:16.5px;line-height:23.1px;font-weight:400;color:#555b62;letter-spacing:-0.096px;">2025-05-14 -</div>
<div class="t" style="left:1296.5px;top:670.21px;font-size:16.5px;line-height:23.1px;font-weight:400;color:#555b62;letter-spacing:-0.084px;">2025-05-15</div>
<div class="t" style="left:1425.5px;top:645.71px;font-size:16.5px;line-height:23.1px;font-weight:400;color:#555b62;letter-spacing:-0.111px;">00:00 -</div>
<div class="t" style="left:1425.5px;top:670.21px;font-size:16.5px;line-height:23.1px;font-weight:400;color:#555b62;letter-spacing:-0.092px;">23:59</div>
<div class="t" style="left:1503.5px;top:645.71px;font-size:16.5px;line-height:23.1px;font-weight:400;color:#555b62;letter-spacing:0.157px;">AVM</div>
<div class="t" style="left:1594.2px;top:648.08px;font-size:13px;line-height:18.2px;font-weight:700;color:#ffffff;letter-spacing:-0.189px;">Initial</div>
<div class="t" style="left:1648.3000000000002px;top:648.08px;font-size:13px;line-height:18.2px;font-weight:700;color:#ffffff;letter-spacing:-0.872px;">Cancelled</div>
<div class="t" style="left:353.5px;top:707.68px;font-size:13.5px;line-height:18.9px;font-weight:400;color:#a2a9b1;letter-spacing:0.000px;">8</div>
<div class="t" style="left:382.5px;top:704.54px;font-size:16.5px;line-height:23.1px;font-weight:400;color:#555b62;letter-spacing:-0.073px;">01-0630127</div>
<div class="t" style="left:497.5px;top:704.54px;font-size:16.5px;line-height:23.1px;font-weight:400;color:#555b62;letter-spacing:-0.084px;">2025-03-26</div>
<div class="t" style="left:601.5px;top:704.54px;font-size:16.5px;line-height:23.1px;font-weight:400;color:#555b62;letter-spacing:-0.819px;">ILO CONSTRUCTION INC.</div>
<div class="t" style="left:892.5px;top:704.54px;font-size:16.5px;line-height:23.1px;font-weight:400;color:#555b62;letter-spacing:-1.344px;">ECOPARK WAREHOUSE</div>
<div class="t" style="left:1137.5px;top:704.54px;font-size:16.5px;line-height:23.1px;font-weight:400;color:#555b62;letter-spacing:-0.406px;">Binan Laguna</div>
<div class="t" style="left:1296.5px;top:704.54px;font-size:16.5px;line-height:23.1px;font-weight:400;color:#555b62;letter-spacing:-0.096px;">2025-05-14 -</div>
<div class="t" style="left:1296.5px;top:729.04px;font-size:16.5px;line-height:23.1px;font-weight:400;color:#555b62;letter-spacing:-0.084px;">2025-05-15</div>
<div class="t" style="left:1425.5px;top:704.54px;font-size:16.5px;line-height:23.1px;font-weight:400;color:#555b62;letter-spacing:-0.111px;">00:00 -</div>
<div class="t" style="left:1425.5px;top:729.04px;font-size:16.5px;line-height:23.1px;font-weight:400;color:#555b62;letter-spacing:-0.092px;">23:59</div>
<div class="t" style="left:1503.5px;top:704.54px;font-size:16.5px;line-height:23.1px;font-weight:400;color:#555b62;letter-spacing:0.157px;">AVM</div>
<div class="t" style="left:1594.2px;top:706.91px;font-size:13px;line-height:18.2px;font-weight:700;color:#ffffff;letter-spacing:-0.189px;">Initial</div>
<div class="t" style="left:1648.3000000000002px;top:706.91px;font-size:13px;line-height:18.2px;font-weight:700;color:#ffffff;letter-spacing:-0.619px;">Approved</div>
<div class="t" style="left:353.5px;top:766.51px;font-size:13.5px;line-height:18.9px;font-weight:400;color:#a2a9b1;letter-spacing:0.000px;">9</div>
<div class="t" style="left:382.5px;top:763.37px;font-size:16.5px;line-height:23.1px;font-weight:400;color:#555b62;letter-spacing:-0.075px;">01-010988</div>
<div class="t" style="left:497.5px;top:763.37px;font-size:16.5px;line-height:23.1px;font-weight:400;color:#555b62;letter-spacing:-0.084px;">2025-05-05</div>
<div class="t" style="left:601.5px;top:763.37px;font-size:16.5px;line-height:23.1px;font-weight:400;color:#555b62;letter-spacing:-1.204px;">CCT CONSTRUCTORS CORPORATION</div>
<div class="t" style="left:892.5px;top:763.37px;font-size:16.5px;line-height:23.1px;font-weight:400;color:#555b62;letter-spacing:-0.061px;">Ogithani Warehouse</div>
<div class="t" style="left:1137.5px;top:763.37px;font-size:16.5px;line-height:23.1px;font-weight:400;color:#555b62;letter-spacing:-0.406px;">Binan Laguna</div>
<div class="t" style="left:1296.5px;top:763.37px;font-size:16.5px;line-height:23.1px;font-weight:400;color:#555b62;letter-spacing:-0.084px;">2025-05-14</div>
<div class="t" style="left:1425.5px;top:763.37px;font-size:16.5px;line-height:23.1px;font-weight:400;color:#555b62;letter-spacing:-0.111px;">08:00 -</div>
<div class="t" style="left:1425.5px;top:787.87px;font-size:16.5px;line-height:23.1px;font-weight:400;color:#555b62;letter-spacing:-0.092px;">20:00</div>
<div class="t" style="left:1503.5px;top:763.37px;font-size:16.5px;line-height:23.1px;font-weight:400;color:#555b62;letter-spacing:0.157px;">AVM</div>
<div class="t" style="left:1594.2px;top:765.74px;font-size:13px;line-height:18.2px;font-weight:700;color:#ffffff;letter-spacing:-0.189px;">Initial</div>
<div class="t" style="left:1648.3000000000002px;top:765.74px;font-size:13px;line-height:18.2px;font-weight:700;color:#ffffff;letter-spacing:-0.619px;">Approved</div>
<div class="t" style="left:353.5px;top:825.34px;font-size:13.5px;line-height:18.9px;font-weight:400;color:#a2a9b1;letter-spacing:0.892px;">10</div>
<div class="t" style="left:382.5px;top:822.20px;font-size:16.5px;line-height:23.1px;font-weight:400;color:#555b62;letter-spacing:-0.084px;">01-010-176</div>
<div class="t" style="left:497.5px;top:822.20px;font-size:16.5px;line-height:23.1px;font-weight:400;color:#555b62;letter-spacing:-0.084px;">2025-04-30</div>
<div class="t" style="left:601.5px;top:822.20px;font-size:16.5px;line-height:23.1px;font-weight:400;color:#555b62;letter-spacing:-1.204px;">CCT CONSTRUCTORS CORPORATION</div>
<div class="t" style="left:892.5px;top:822.20px;font-size:16.5px;line-height:23.1px;font-weight:400;color:#555b62;letter-spacing:-0.791px;">SUZUKI GARAGE BUILDING &amp;</div>
<div class="t" style="left:892.5px;top:846.70px;font-size:16.5px;line-height:23.1px;font-weight:400;color:#555b62;letter-spacing:-0.868px;">PARKING</div>
<div class="t" style="left:1137.5px;top:822.20px;font-size:16.5px;line-height:23.1px;font-weight:400;color:#555b62;letter-spacing:-0.406px;">Binan Laguna</div>
<div class="t" style="left:1296.5px;top:822.20px;font-size:16.5px;line-height:23.1px;font-weight:400;color:#555b62;letter-spacing:-0.084px;">2025-05-14</div>
<div class="t" style="left:1425.5px;top:822.20px;font-size:16.5px;line-height:23.1px;font-weight:400;color:#555b62;letter-spacing:-0.111px;">08:00 -</div>
<div class="t" style="left:1425.5px;top:846.70px;font-size:16.5px;line-height:23.1px;font-weight:400;color:#555b62;letter-spacing:-0.092px;">20:00</div>
<div class="t" style="left:1503.5px;top:822.20px;font-size:16.5px;line-height:23.1px;font-weight:400;color:#555b62;letter-spacing:0.157px;">AVM</div>
<div class="t" style="left:1594.2px;top:824.57px;font-size:13px;line-height:18.2px;font-weight:700;color:#ffffff;letter-spacing:-0.189px;">Initial</div>
<div class="t" style="left:1648.3000000000002px;top:824.57px;font-size:13px;line-height:18.2px;font-weight:700;color:#ffffff;letter-spacing:-0.619px;">Approved</div>
</body></html>
